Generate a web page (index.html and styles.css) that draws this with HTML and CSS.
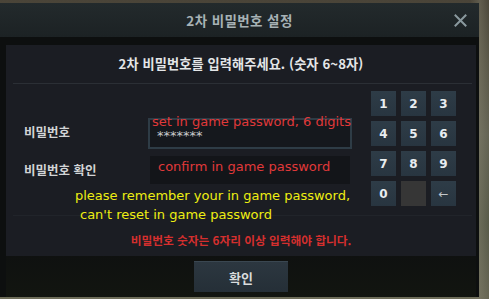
FILE: index.html
```html
<!DOCTYPE html>
<html lang="ko">
<head>
<meta charset="utf-8">
<title>2차 비밀번호 설정</title>
<link rel="stylesheet" href="styles.css">
</head>
<body>
<div class="scene">
  <div class="dialog">
    <div class="titlebar">
      <span class="title">2차 비밀번호 설정</span>
      <span class="close" aria-label="닫기">
        <svg width="13" height="13" viewBox="0 0 13 13"><path d="M1.5 1.5 L11.5 11.5 M11.5 1.5 L1.5 11.5" stroke="#8a999e" stroke-width="2" stroke-linecap="square"/></svg>
      </span>
    </div>
    <div class="frame">
      <div class="panel">
        <div class="header">2차 비밀번호를 입력해주세요. (숫자 6~8자)</div>
        <div class="sep"></div>
        <div class="body">
          <div class="form">
            <div class="label label-first">비밀번호</div>
            <div class="input input-main"><span class="mask">*******</span></div>
            <div class="label">비밀번호 확인</div>
            <div class="input input-confirm"></div>
          </div>
          <div class="keypad">
            <span class="key">1</span><span class="key">2</span><span class="key">3</span>
            <span class="key">4</span><span class="key">5</span><span class="key">6</span>
            <span class="key">7</span><span class="key">8</span><span class="key">9</span>
            <span class="key">0</span><span class="key key-blank"></span><span class="key key-back">←</span>
          </div>
          <div class="note note-set">set in game password, 6 digits</div>
          <div class="note note-confirm">confirm in game password</div>
          <div class="note note-remember">
            <span class="line">please remember your in game password,</span>
            <span class="line line-indent">can't reset in game password</span>
          </div>
        </div>
        <div class="faint"></div>
        <div class="error">비밀번호 숫자는 6자리 이상 입력해야 합니다.</div>
      </div>
      <div class="footer">
        <span class="ok">확인</span>
      </div>
    </div>
  </div>
</div>
</body>
</html>
```
FILE: styles.css
```css
html, body {
  margin: 0;
  padding: 0;
}
body {
  width: 489px;
  height: 299px;
  overflow: hidden;
  font-family: "Noto Sans CJK KR", "Noto Sans", sans-serif;
}
.scene {
  width: 489px;
  height: 299px;
  box-sizing: border-box;
  padding-top: 3px;
  background:
    linear-gradient(90deg, rgba(0,0,0,0) 0, rgba(0,0,0,0) 470px, rgba(120,118,100,0.5) 480px, rgba(80,80,66,0.3) 489px),
    linear-gradient(180deg, #4a4438 0, #5e5a4a 20%, #6d6c5c 45%, #5b5f4c 75%, #6f6e5a 100%);
}
.dialog {
  width: 479px;
  height: 294px;
  background: #0e1010;
  box-shadow: inset 2px 0 0 #090a0a;
}
.titlebar {
  position: relative;
  height: 34px;
  display: flex;
  align-items: center;
  justify-content: center;
  background: linear-gradient(180deg, #232a2c, #1c2224);
}
.title {
  color: #a7b2b5;
  font-size: 13.5px;
  font-weight: 700;
  letter-spacing: 0.4px;
}
.close {
  position: absolute;
  right: 12px;
  top: 11px;
  width: 13px;
  height: 13px;
  display: block;
}
.close svg {
  display: block;
}
.frame {
  padding: 8px 3px 0 6px;
  background: #0d0f0f;
}
.panel {
  height: 211px;
  background: #1b1d23;
  display: flex;
  flex-direction: column;
}
.header {
  height: 38px;
  line-height: 38px;
  text-align: center;
  color: #e4e6e8;
  font-size: 13.2px;
  font-weight: 700;
  letter-spacing: 0.1px;
}
.sep {
  height: 1px;
  margin: 0 4px 0 7px;
  background: #2b2f35;
}
.body {
  position: relative;
  height: 131px;
  display: flex;
  align-items: flex-start;
}
.form {
  padding: 34px 0 0 18px;
  display: grid;
  grid-template-columns: 124px 204px;
  grid-template-rows: 31px 28px;
  row-gap: 7px;
}
.label {
  align-self: center;
  color: #d2d4d6;
  font-size: 12.5px;
  font-weight: 700;
  line-height: 16px;
}
.label-first {
  padding-bottom: 4px;
}
.input {
  box-sizing: border-box;
}
.input-main {
  border: 2px solid #2e3c46;
  background: #15181d;
  padding-left: 7px;
  line-height: 27px;
}
.input-confirm {
  margin: 0 2px;
  background: #131519;
}
.mask {
  font-family: "DejaVu Sans", sans-serif;
  font-size: 13px;
  line-height: 27px;
  color: #c9cbcc;
}
.keypad {
  margin: 7px 20px 0 auto;
  display: grid;
  grid-template-columns: repeat(3, 25px);
  grid-auto-rows: 25px;
  gap: 5px;
}
.key {
  display: flex;
  align-items: center;
  justify-content: center;
  background: linear-gradient(180deg, #2e3c47, #283540);
  color: #e8edf0;
  font-family: "DejaVu Sans", sans-serif;
  font-size: 12px;
  font-weight: 700;
}
.key-blank {
  background: #363636;
}
.key-back {
  font-weight: 400;
  color: #c2c8cc;
  font-size: 12px;
}
.note {
  position: absolute;
  font-family: "DejaVu Sans", sans-serif;
  font-size: 13px;
  line-height: 15px;
  white-space: nowrap;
}
.note-set {
  left: 146px;
  top: 30px;
  color: #e0393a;
}
.note-confirm {
  left: 152px;
  top: 75px;
  color: #e0393a;
}
.note-remember {
  left: 69px;
  top: 102px;
  line-height: 19px;
  color: #eeee12;
}
.line {
  display: block;
}
.line-indent {
  padding-left: 5px;
}
.faint {
  height: 1px;
  margin: 0 4px 0 7px;
  background: #21242a;
}
.error {
  padding-top: 16px;
  line-height: 16px;
  text-align: center;
  color: #d42f2e;
  font-size: 11.7px;
  font-weight: 700;
}
.footer {
  height: 41px;
  box-sizing: border-box;
  padding-top: 5px;
  display: flex;
  justify-content: center;
  align-items: flex-start;
  background: linear-gradient(180deg, #0f1110, #121510);
}
.ok {
  width: 94px;
  height: 31px;
  box-sizing: border-box;
  display: flex;
  align-items: center;
  justify-content: center;
  background: linear-gradient(180deg, #2c3740, #252f37);
  border-top: 1px solid #3a4751;
  color: #d9dcdd;
  font-size: 13px;
  font-weight: 700;
}
```
